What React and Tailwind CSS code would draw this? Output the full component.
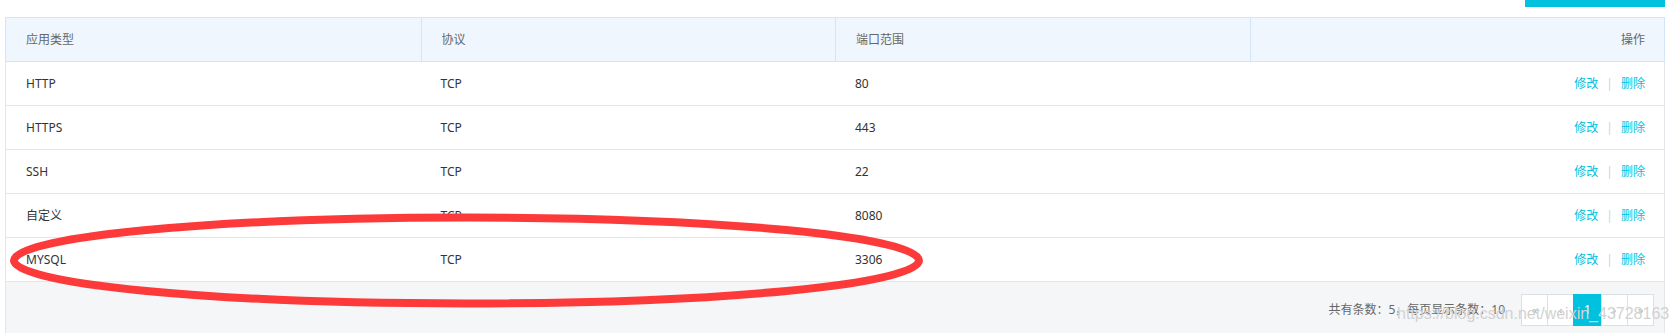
import React from "react";

const rows = [
  ["HTTP", "TCP", "80"],
  ["HTTPS", "TCP", "443"],
  ["SSH", "TCP", "22"],
  ["自定义", "TCP", "8080"],
  ["MYSQL", "TCP", "3306"],
];

export default function App() {
  return (
    <div className="relative w-[1677px] h-[333px] overflow-hidden bg-white pl-[5px] pr-[12px] text-[12px] [font-family:'Noto_Sans','Noto_Sans_CJK_SC',sans-serif]">
      <div className="h-[17px] flex justify-end items-start">
        <div className="w-[140px] h-[7px] bg-[#00c1de]" />
      </div>

      <div className="grid grid-cols-4 h-[45px] border border-[#d3e5f7] bg-[#eff6fe] text-[#666]">
        <div className="flex items-center pl-[20px]">应用类型</div>
        <div className="flex items-center pl-[20px] border-l border-[#d3e5f7]">协议</div>
        <div className="flex items-center pl-[20px] border-l border-[#d3e5f7]">端口范围</div>
        <div className="flex items-center justify-end pr-[19px] border-l border-[#d3e5f7]">操作</div>
      </div>

      <div className="border-x border-[#e3e6eb]">
        {rows.map((r, i) => (
          <div key={i} className="grid grid-cols-4 h-[44px] border-b border-[#e3e6eb] text-[#333]">
            <div className="flex items-center pl-[20px]">{r[0]}</div>
            <div className="flex items-center pl-[20px]">{r[1]}</div>
            <div className="flex items-center pl-[20px]">{r[2]}</div>
            <div className="flex items-center justify-end pr-[19px]">
              <span className="text-[#00c1de]">修改</span>
              <span className="mx-[8px] text-[#cdd3d9]">|</span>
              <span className="text-[#00c1de]">删除</span>
            </div>
          </div>
        ))}
      </div>

      <div className="h-[60px] flex justify-end items-start pt-[12px] pr-[10px] bg-[#f5f6f8] border-x border-[#e3e6eb]">
        <div className="h-[32px] flex items-center mr-[16px] text-[#666]">共有条数：5，每页显示条数：10</div>
        <div className="flex">
          <div className="w-[27px] h-[32px] flex items-center justify-center border border-[#dcdfe3] bg-white text-[#aaa] text-[11px]">«</div>
          <div className="-ml-px w-[27px] h-[32px] flex items-center justify-center border border-[#dcdfe3] bg-white text-[#aaa] text-[11px]">‹</div>
          <div className="-ml-px w-[29px] h-[32px] flex items-center justify-center border border-[#00c1de] bg-[#00c1de] text-white">1</div>
          <div className="-ml-px w-[27px] h-[32px] flex items-center justify-center border border-[#dcdfe3] bg-white text-[#aaa] text-[11px]">›</div>
          <div className="-ml-px w-[27px] h-[32px] flex items-center justify-center border border-[#dcdfe3] bg-white text-[#aaa] text-[11px]">»</div>
        </div>
      </div>

      <svg className="absolute left-0 top-0 pointer-events-none" width="1677" height="333" viewBox="0 0 1677 333">
        <ellipse cx="466.5" cy="260.5" rx="452.5" ry="43" fill="none" stroke="#fd3a3a" strokeWidth="8" />
      </svg>

      <div className="absolute left-[1397px] top-[306px] text-[16px] leading-none whitespace-nowrap text-[#d2d2d2] [font-family:'Liberation_Sans',Arial,sans-serif] pointer-events-none">
        https://blog.csdn.net/weixin_43728163
      </div>
    </div>
  );
}
